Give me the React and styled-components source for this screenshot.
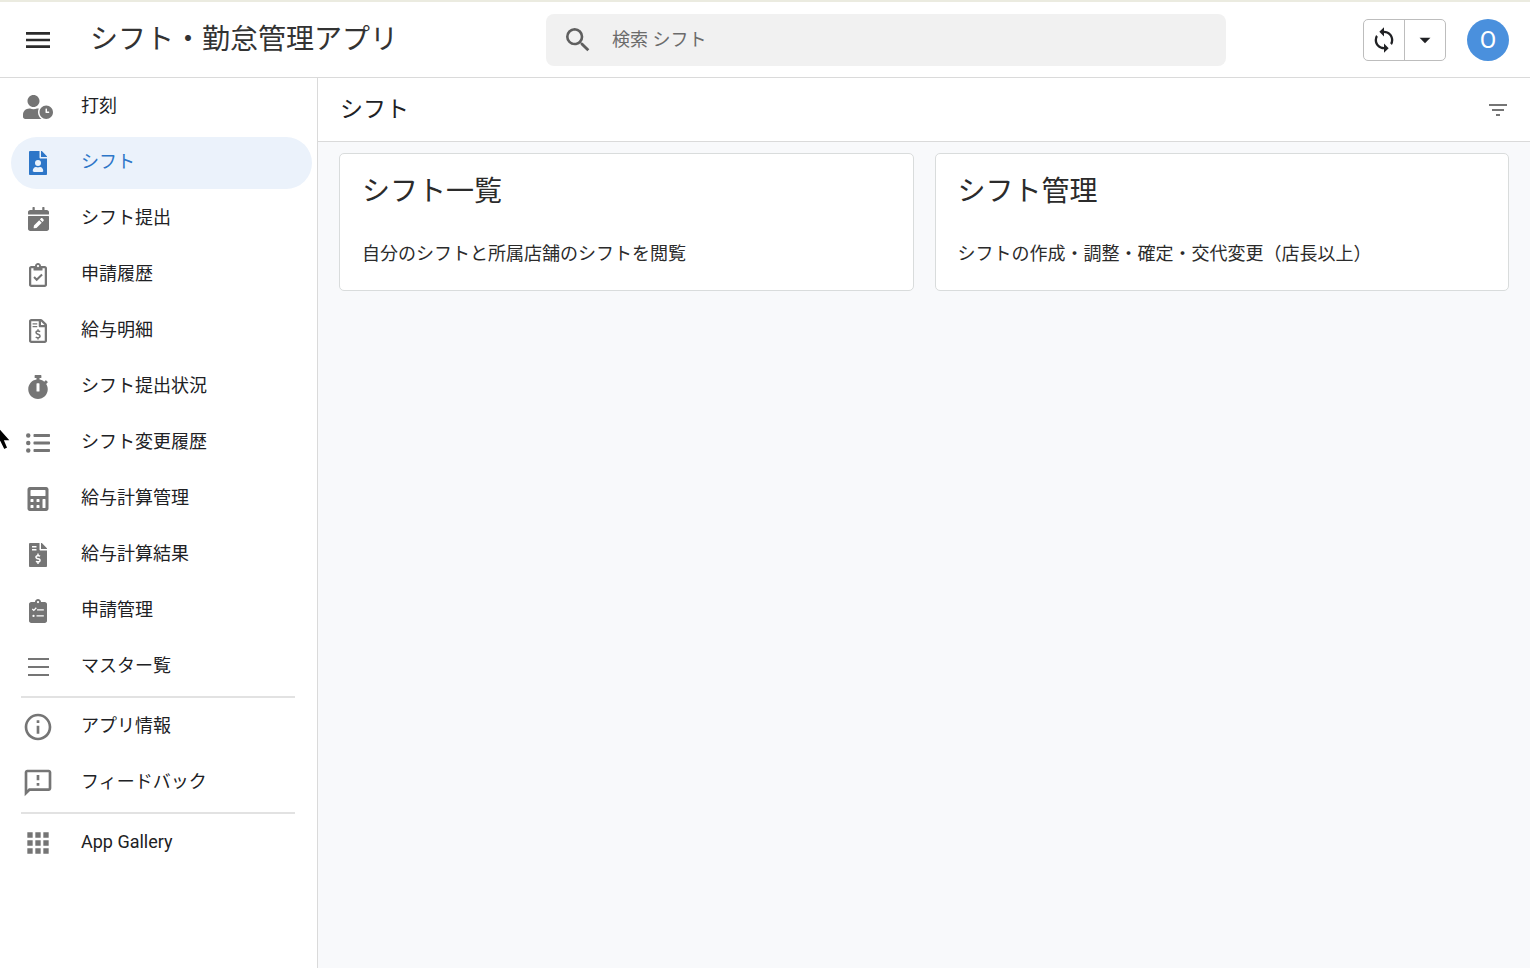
import React, { useState } from 'react';
import styled, { createGlobalStyle } from 'styled-components';
import { FaUserClock, FaStopwatch, FaListUl, FaCalculator, FaFileInvoiceDollar } from 'react-icons/fa';
import {
  MdMenu,
  MdSearch,
  MdSync,
  MdArrowDropDown,
  MdFilterList,
  MdOutlineInfo,
  MdOutlineFeedback,
  MdApps,
} from 'react-icons/md';

const FileUserIcon = () => (
  <svg width="18" height="24" viewBox="0 0 384 512" fill="currentColor">
    <path d="M224 136V0H24C10.7 0 0 10.7 0 24v464c0 13.3 10.7 24 24 24h336c13.3 0 24-10.7 24-24V160H248c-13.2 0-24-10.8-24-24zm160-14.1v6.1H256V0h6.1c6.4 0 12.5 2.5 17 7l97.9 98c4.5 4.5 7 10.6 7 16.9z" />
    <circle cx="192" cy="256" r="64" fill="#ebf2fb" />
    <path fill="#ebf2fb" d="M80 429c0-51 30-87 67-87 16 0 20 9 45 9s29-9 45-9c37 0 67 36 67 87 0 11-10 19-22 19H102c-12 0-22-8-22-19z" />
  </svg>
);

const CalendarEditIcon = () => (
  <svg width="21" height="24" viewBox="0 0 448 512" fill="currentColor">
    <path d="M12 192h424c6.600 0 12 5.400 12 12v260c0 26.500-21.500 48-48 48H48c-26.500 0-48-21.500-48-48V204c0-6.600 5.400-12 12-12zm436-44v-36c0-26.500-21.500-48-48-48h-48V12c0-6.600-5.400-12-12-12h-24c-6.600 0-12 5.400-12 12v52H144V12c0-6.600-5.400-12-12-12h-24c-6.600 0-12 5.400-12 12v52H48C21.500 64 0 85.500 0 112v36c0 6.600 5.400 12 12 12h424c6.600 0 12-5.400 12-12z" />
    <path fill="#fff" d="M239 280l54 54-112 112-49 6c-7 1-12-5-12-12l7-48zM328 262l-17-17c-11-11-28-11-39 0l-18 19 55 55 19-18c11-11 11-28 0-39z" />
  </svg>
);

const ClipboardCheckIcon = () => (
  <svg width="18" height="24" viewBox="0 0 384 512" fill="currentColor">
    <path d="M336 64h-80c0-35.300-28.700-64-64-64s-64 28.700-64 64H48C21.500 64 0 85.500 0 112v352c0 26.500 21.500 48 48 48h288c26.500 0 48-21.500 48-48V112c0-26.500-21.500-48-48-48zM192 40c13.300 0 24 10.700 24 24s-10.700 24-24 24-24-10.700-24-24 10.700-24 24-24zm144 418c0 3.300-2.700 6-6 6H54c-3.300 0-6-2.700-6-6V118c0-3.300 2.700-6 6-6h42v36c0 6.600 5.400 12 12 12h168c6.600 0 12-5.400 12-12v-36h42c3.300 0 6 2.700 6 6z" />
    <path d="M108 300l56 56 114-112" fill="none" stroke="currentColor" strokeWidth="44" />
  </svg>
);

const FileInvoiceIcon = () => (
  <svg width="18" height="24" viewBox="0 0 384 512" fill="currentColor">
    <path d="M369.900 97.900L286 14C277 5 264.800 0 252.100 0H48C21.500 0 0 21.500 0 48v416c0 26.500 21.500 48 48 48h288c26.500 0 48-21.500 48-48V131.900c0-12.700-5.100-25-14.100-34zM332.100 128H256V51.900l76.100 76.100zM48 464V48h160v104c0 13.300 10.700 24 24 24h104v288H48z" />
    <path d="M76 88h100v30H76zM76 148h100v30H76z" />
    <path
      d="M238 270c-14-12-28-16-46-16-26 0-42 14-42 34 0 46 86 28 86 76 0 22-18 36-44 36-20 0-36-6-48-18M192 216v38M192 400v36"
      fill="none"
      stroke="currentColor"
      strokeWidth="32"
    />
  </svg>
);

const ClipboardListIcon = () => (
  <svg width="18" height="24" viewBox="0 0 384 512" fill="currentColor">
    <path d="M336 64h-80c0-35.300-28.700-64-64-64s-64 28.700-64 64H48C21.500 64 0 85.500 0 112v352c0 26.500 21.500 48 48 48h288c26.500 0 48-21.500 48-48V112c0-26.500-21.500-48-48-48z" />
    <circle cx="192" cy="64" r="24" fill="#fff" />
    <path d="M70 214l32 30 54-56M172 232h144M160 360h156" fill="none" stroke="#fff" strokeWidth="28" />
    <circle cx="96" cy="360" r="24" fill="#fff" />
  </svg>
);

const BarsIcon = () => (
  <svg width="21" height="24" viewBox="0 0 21 24" fill="currentColor">
    <path d="M0 3h21v2H0zM0 11h21v2H0zM0 19h21v2H0z" />
  </svg>
);

const mainMenu = [
  { label: '打刻', icon: <FaUserClock style={{ width: 30 }} /> },
  { label: 'シフト', icon: <FileUserIcon /> },
  { label: 'シフト提出', icon: <CalendarEditIcon /> },
  { label: '申請履歴', icon: <ClipboardCheckIcon /> },
  { label: '給与明細', icon: <FileInvoiceIcon /> },
  { label: 'シフト提出状況', icon: <FaStopwatch size={24} /> },
  { label: 'シフト変更履歴', icon: <FaListUl size={24} /> },
  { label: '給与計算管理', icon: <FaCalculator size={24} /> },
  { label: '給与計算結果', icon: <FaFileInvoiceDollar size={24} /> },
  { label: '申請管理', icon: <ClipboardListIcon /> },
  { label: 'マスター覧', icon: <BarsIcon /> },
];

const helpMenu = [
  { label: 'アプリ情報', icon: <MdOutlineInfo size={32} /> },
  { label: 'フィードバック', icon: <MdOutlineFeedback size={32} /> },
];

const cards = [
  { title: 'シフト一覧', text: '自分のシフトと所属店舗のシフトを閲覧' },
  { title: 'シフト管理', text: 'シフトの作成・調整・確定・交代変更（店長以上）' },
];

function AppHeader() {
  const [search, setSearch] = useState('');
  return (
    <Header>
      <Brand>
        <IconButton aria-label="メニュー">
          <MdMenu size={32} />
        </IconButton>
        <AppTitle>シフト・勤怠管理アプリ</AppTitle>
      </Brand>
      <SearchBox>
        <MdSearch size={32} />
        <SearchInput
          type="text"
          aria-label="検索"
          placeholder="検索 シフト"
          value={search}
          onChange={(e) => setSearch(e.target.value)}
        />
      </SearchBox>
      <Actions>
        <SyncGroup>
          <SyncButton aria-label="同期">
            <MdSync size={28} />
          </SyncButton>
          <SyncButton aria-label="同期オプション">
            <MdArrowDropDown size={26} />
          </SyncButton>
        </SyncGroup>
        <Avatar aria-label="アカウント">O</Avatar>
      </Actions>
    </Header>
  );
}

function MenuItem({ item, active, onSelect }) {
  return (
    <MenuLink
      href="#"
      $active={active}
      onClick={(e) => {
        e.preventDefault();
        if (onSelect) onSelect(item.label);
      }}
    >
      <MenuIcon>{item.icon}</MenuIcon>
      <MenuLabel>{item.label}</MenuLabel>
    </MenuLink>
  );
}

function SideMenu() {
  const [current, setCurrent] = useState('シフト');
  return (
    <Sidebar>
      {mainMenu.map((item) => (
        <MenuItem key={item.label} item={item} active={item.label === current} onSelect={setCurrent} />
      ))}
      <Divider />
      {helpMenu.map((item) => (
        <MenuItem key={item.label} item={item} />
      ))}
      <Divider />
      <MenuItem item={{ label: 'App Gallery', icon: <MdApps size={32} /> }} />
    </Sidebar>
  );
}

export default function App() {
  return (
    <Page>
      <GlobalStyle />
      <AppHeader />
      <Body>
        <SideMenu />
        <Main>
          <ViewHeader>
            <ViewTitle>シフト</ViewTitle>
            <FilterButton aria-label="フィルタ">
              <MdFilterList size={24} />
            </FilterButton>
          </ViewHeader>
          <CardGrid>
            {cards.map((card) => (
              <Card key={card.title} href="#">
                <CardTitle>{card.title}</CardTitle>
                <CardText>{card.text}</CardText>
              </Card>
            ))}
          </CardGrid>
        </Main>
      </Body>
      <Cursor width="14" height="32" viewBox="0 0 14 32">
        <path d="M-6 1v26l6-6 4 8 4-2-3-7h6z" fill="#000" stroke="#fff" strokeWidth="1.5" />
      </Cursor>
    </Page>
  );
}

const GlobalStyle = createGlobalStyle`
  * {
    box-sizing: border-box;
  }

  body {
    margin: 0;
    background: #fff;
    color: #202124;
    font-family: Roboto, "Noto Sans CJK JP", sans-serif;
    font-size: 18px;
  }

  button {
    padding: 0;
    border: none;
    background: none;
    color: inherit;
    font: inherit;
    cursor: pointer;
  }

  svg {
    display: block;
    flex: none;
  }
`;

const Page = styled.div`
  position: relative;
  display: flex;
  flex-direction: column;
  min-height: 100vh;
`;

const Header = styled.header`
  display: flex;
  align-items: center;
  height: 78px;
  padding: 0 21px 0 22px;
  border-top: 2px solid #ebebe0;
  border-bottom: 1px solid #dadada;
`;

const Brand = styled.div`
  display: flex;
  align-items: center;
  gap: 36px;
  width: 524px;
`;

const IconButton = styled.button`
  color: #2b2b2b;
`;

const AppTitle = styled.h1`
  margin: 0;
  font-size: 28px;
  font-weight: 400;
  line-height: 40px;
  color: #333;
`;

const SearchBox = styled.label`
  display: flex;
  align-items: center;
  flex: 1;
  max-width: 680px;
  height: 52px;
  padding: 0 16px;
  gap: 18px;
  border-radius: 8px;
  background: #f1f1f1;
  color: #5f5f5f;
`;

const SearchInput = styled.input`
  flex: 1;
  min-width: 0;
  padding: 0;
  border: none;
  outline: none;
  background: transparent;
  color: #202124;
  font: inherit;

  &::placeholder {
    color: #6b6b6b;
    opacity: 1;
  }
`;

const Actions = styled.div`
  display: flex;
  align-items: center;
  gap: 21px;
  margin-left: auto;
`;

const SyncGroup = styled.div`
  display: flex;
  height: 42px;
  border: 1px solid #bdbdbd;
  border-radius: 5px;
`;

const SyncButton = styled.button`
  display: flex;
  align-items: center;
  justify-content: center;
  width: 40px;

  & + & {
    width: 41px;
    border-left: 1px solid #bdbdbd;
  }
`;

const Avatar = styled.button`
  width: 42px;
  height: 42px;
  border-radius: 50%;
  background: #4a90dd;
  color: #fff;
  font-size: 24px;
  line-height: 42px;
`;

const Body = styled.div`
  display: flex;
  flex: 1;
`;

const Sidebar = styled.nav`
  display: flex;
  flex-direction: column;
  flex: none;
  width: 318px;
  padding: 1px 5px 0 11px;
  border-right: 1px solid #dadada;
`;

const MenuLink = styled.a`
  display: flex;
  align-items: center;
  height: 52px;
  margin: 2px 0;
  border-radius: 26px;
  background: ${(props) => (props.$active ? '#ebf2fb' : 'transparent')};
  color: ${(props) => (props.$active ? '#2d76c8' : '#757575')};
  text-decoration: none;

  span {
    color: ${(props) => (props.$active ? '#2d76c8' : '#202124')};
  }
`;

const MenuIcon = styled.div`
  display: flex;
  justify-content: center;
  width: 32px;
  height: 32px;
  margin: 0 27px 0 11px;
  align-items: center;

  svg {
    min-height: 24px;
  }
`;

const MenuLabel = styled.span`
  line-height: 28px;
  padding-bottom: 2px;
`;

const Divider = styled.hr`
  height: 2px;
  margin: 1px 17px 1px 10px;
  border: none;
  background: #e2e2e2;
`;

const Main = styled.main`
  flex: 1;
  min-width: 0;
  background: #f8f9fb;
`;

const ViewHeader = styled.div`
  display: flex;
  align-items: center;
  justify-content: space-between;
  height: 64px;
  padding: 0 20px 0 22px;
  border-bottom: 1px solid #dadada;
  background: #fff;
`;

const ViewTitle = styled.h2`
  margin: 0;
  font-size: 23px;
  font-weight: 400;
  line-height: 32px;
`;

const FilterButton = styled.button`
  color: #757575;
`;

const CardGrid = styled.div`
  display: grid;
  grid-template-columns: 1fr 1fr;
  gap: 21px;
  padding: 11px 21px;
`;

const Card = styled.a`
  padding: 18px 22px;
  border: 1px solid #d9dcdc;
  border-radius: 5px;
  background: #fff;
  color: #2b2b2b;
  text-decoration: none;
`;

const CardTitle = styled.h3`
  margin: 0 0 24px;
  font-size: 28px;
  font-weight: 400;
  line-height: 40px;
`;

const CardText = styled.p`
  margin: 0;
  line-height: 36px;
`;

const Cursor = styled.svg`
  position: absolute;
  left: 0;
  top: 421px;
  pointer-events: none;
`;
